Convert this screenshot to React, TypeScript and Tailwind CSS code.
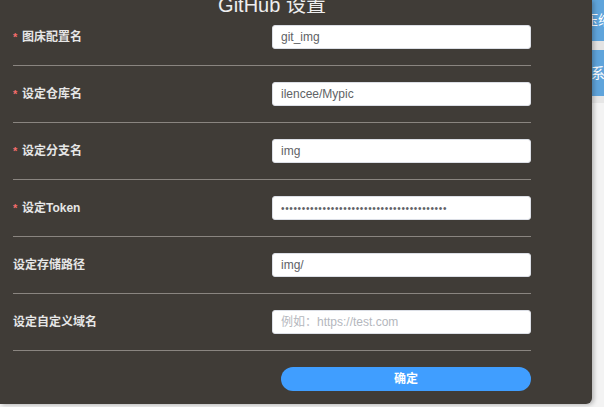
const rows = [
  { label: "图床配置名", required: true, value: "git_img" },
  { label: "设定仓库名", required: true, value: "ilencee/Mypic" },
  { label: "设定分支名", required: true, value: "img" },
  { label: "设定Token", required: true, value: "••••••••••••••••••••••••••••••••••••••••", secret: true },
  { label: "设定存储路径", required: false, value: "img/" },
  { label: "设定自定义域名", required: false, value: "", placeholder: "例如：https://test.com" },
]

export default function App() {
  return (
    <div
      className="flex w-[604px] h-[407px] overflow-hidden bg-[#f3f3f3]"
      style={{ fontFamily: '"Liberation Sans", "Noto Sans CJK SC", sans-serif' }}
    >
      {/* dialog panel */}
      <div className="relative z-10 w-[592px] h-[404px] shrink-0 bg-[#403c37] rounded-br-[6px] shadow-[2px_1px_4px_rgba(0,0,0,0.25)]">
        <div className="w-[531px] pl-[13px]">
          <div className="flex justify-center items-start h-[9px]">
            <div className="-mt-[5px] text-[20px] leading-[20px] text-[#eeeeee] whitespace-nowrap">GitHub 设置</div>
          </div>

          {rows.map((r) => (
            <div key={r.label}>
              <div className="flex items-center justify-between py-4">
                <div className="flex items-center text-[12px] font-bold text-[#e6e6e6]">
                  {r.required ? (
                    <span className="w-[9px] text-[#f56c6c] text-[11px]">*</span>
                  ) : null}
                  <span>{r.label}</span>
                </div>
                <input
                  readOnly
                  type="text"
                  value={r.value}
                  placeholder={r.placeholder}
                  className={
                    "w-[259px] h-[24px] rounded-[3px] border border-[#dcdfe6] bg-white px-[8px] text-[#606266] placeholder:text-[#b4b7bd] outline-none " +
                    (r.secret ? "text-[10px] tracking-[0.65px]" : "text-[12px]")
                  }
                />
              </div>
              <div className="h-px bg-[#8a8580]" />
            </div>
          ))}

          <div className="flex justify-end pt-4">
            <button className="w-[250px] h-[24px] rounded-full bg-[#409eff] text-white text-[12px] font-bold">
              确定
            </button>
          </div>
        </div>
      </div>

      {/* side menu peeking out behind the dialog */}
      <div className="flex-1 flex flex-col">
        <div className="h-[41px] bg-[#5fa4db] overflow-hidden text-white text-[14px] leading-[41px] whitespace-nowrap -ml-[8px]">
          压缩图片
        </div>
        <div className="h-[9px] bg-[#e3e3e3]" />
        <div className="h-[46px] bg-[#5fa4db] overflow-hidden text-white text-[14px] leading-[46px] whitespace-nowrap -ml-[1px]">
          系统设置
        </div>
        <div className="h-[7px] bg-[#e6e6e6]" />
        <div className="flex-1 bg-[#f3f3f3]" />
      </div>
    </div>
  )
}
